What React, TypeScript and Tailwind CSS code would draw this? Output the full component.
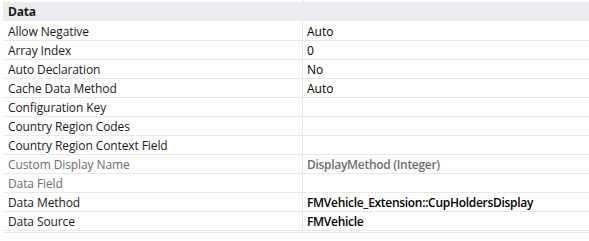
import React from "react";

type Row = { name: string; value?: string; dim?: boolean; bold?: boolean };

const rows: Row[] = [
  { name: "Allow Negative", value: "Auto" },
  { name: "Array Index", value: "0" },
  { name: "Auto Declaration", value: "No" },
  { name: "Cache Data Method", value: "Auto" },
  { name: "Configuration Key" },
  { name: "Country Region Codes" },
  { name: "Country Region Context Field" },
  { name: "Custom Display Name", value: "DisplayMethod (Integer)", dim: true, bold: true },
  { name: "Data Field", dim: true },
  { name: "Data Method", value: "FMVehicle_Extension::CupHoldersDisplay", bold: true },
  { name: "Data Source", value: "FMVehicle", bold: true },
];

export default function App() {
  return (
    <div
      className="w-[589px] h-[241px] bg-white text-[12px] text-[#1a1a1a] overflow-hidden"
      style={{ fontFamily: '"Open Sans", "Noto Sans", sans-serif' }}
    >
      <div className="flex h-[2px]">
        <div className="w-[303px]" />
        <div className="w-px bg-[#e6e6e6]" />
      </div>
      <div className="h-[19px] ml-[3px] bg-[#ececf0] flex items-center pl-[5px] pt-[1px] font-bold tracking-[-0.2px]">Data</div>
      <div className="h-[1px]" />
      {rows.map((r) => (
        <div key={r.name} className="flex h-[19px] ml-[3px] border-b border-[#e8e8e8]">
          <div
            className={`w-[300px] pl-[5px] pt-[2px] flex items-center border-r border-[#e8e8e8] tracking-[-0.1px] ${r.dim ? "text-[#6d6d6d]" : ""}`}
          >
            {r.name}
          </div>
          <div
            className={`flex-1 pl-[4px] pt-[2px] flex items-center ${r.bold ? "font-semibold tracking-[-0.3px]" : ""} ${r.dim ? "text-[#6d6d6d]" : "text-black"}`}
          >
            {r.value}
          </div>
        </div>
      ))}
      <div className="ml-[3px] mt-[1px] border-b border-[#e8e8e8]" />
    </div>
  );
}
